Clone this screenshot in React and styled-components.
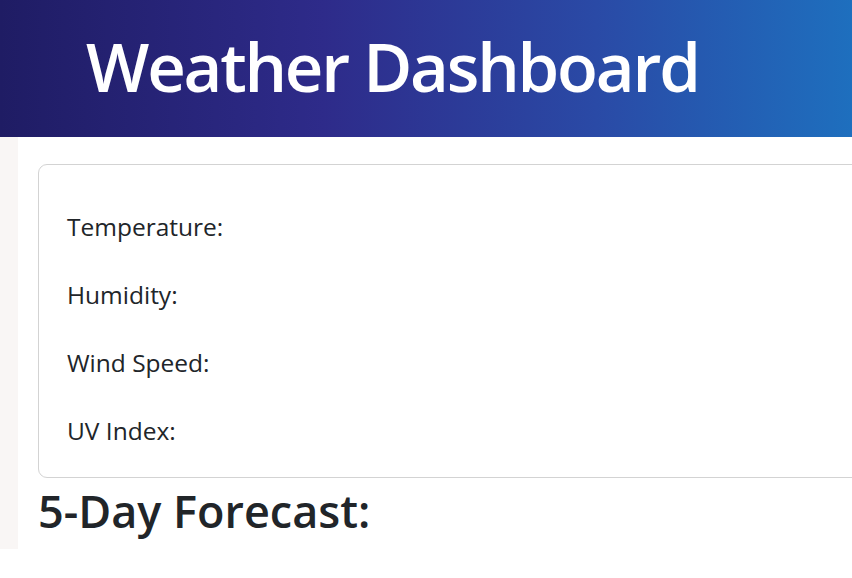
import React from "react";
import styled, { createGlobalStyle } from "styled-components";

const Global = createGlobalStyle`
  html, body { margin: 0; padding: 0; background: #ffffff; }
  body { overflow: hidden; font-family: "Open Sans", "Noto Sans", sans-serif; color: #212529; }
  * { box-sizing: border-box; }
`;

const Header = styled.header`
  height: 137px;
  display: flex;
  align-items: center;
  padding-left: 86px;
  background: linear-gradient(90deg, #1f1c64 0%, #2e2b8a 38%, #2a4aa6 70%, #1e6fbe 100%);
`;

const Title = styled.h1`
  margin: 0;
  color: #ffffff;
  font-family: "Open Sans", sans-serif;
  font-weight: 600;
  font-size: 67px;
  line-height: 1;
  letter-spacing: -2.2px;
  padding-bottom: 4px;
`;

const Main = styled.div`
  display: flex;
`;

const Sidebar = styled.aside`
  width: 18px;
  flex: none;
  background: #f9f6f5;
`;

const Content = styled.section`
  flex: 1;
  padding: 27px 0 0 20px;
  min-width: 0;
`;

const Card = styled.div`
  width: 900px;
  border: 1px solid #d3d3d3;
  border-radius: 9px;
  padding: 28px 28px 12px 28px;
`;

const Stat = styled.p`
  margin: 0;
  font-size: 24.5px;
  line-height: 68px;
`;

const Heading = styled.h2`
  margin: -5px 0 0 0;
  font-size: 45px;
  font-weight: 600;
  line-height: 76px;
`;

export default function App() {
  const stats = ["Temperature:", "Humidity:", "Wind Speed:", "UV Index:"];
  return (
    <>
      <Global />
      <Header>
        <Title>Weather Dashboard</Title>
      </Header>
      <Main>
        <Sidebar />
        <Content>
          <Card>
            {stats.map((s) => (
              <Stat key={s}>{s}</Stat>
            ))}
          </Card>
          <Heading>5-Day Forecast:</Heading>
        </Content>
      </Main>
    </>
  );
}
